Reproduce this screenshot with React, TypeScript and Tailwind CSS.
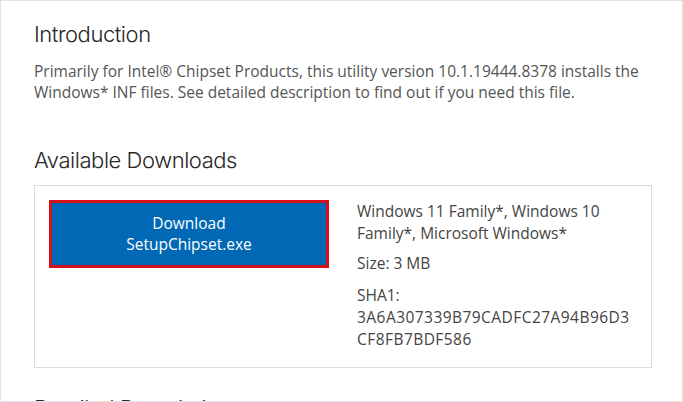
import React from 'react';

const heading = "text-[22px] font-light leading-[28px] text-[#262626] font-['Inter','Lato',sans-serif] tracking-[-0.45px]";

export default function App() {
  return (
    <div className="w-[683px] h-[402px] overflow-hidden bg-white border border-[#e2e2e2] pl-[33px] pt-[19px] font-['Open_Sans','Noto_Sans',sans-serif]">
      <h2 className={heading}>Introduction</h2>
      <p className="mt-[13px] w-[630px] text-[15.5px] leading-[21px] text-[#555]">
        Primarily for Intel® Chipset Products, this utility version 10.1.19444.8378 installs the Windows* INF files. See detailed description to find out if you need this file.
      </p>

      <h2 className={`${heading} mt-[43px]`}>Available Downloads</h2>
      <div className="mt-[11px] flex w-[618px] h-[183px] border border-[#dcdcdc] pl-[14px] pt-[14px]">
        <button className="w-[280px] h-[68px] shrink-0 border-[3px] border-[#d4101a] bg-[#0068b5] text-white text-[15.5px] leading-[21px]">
          Download
          <br />
          SetupChipset.exe
        </button>
        <div className="ml-[28px] text-[15.5px] leading-[22px] text-[#444]">
          <p>
            Windows 11 Family*, Windows 10
            <br />
            Family*, Microsoft Windows*
          </p>
          <p className="mt-[8px]">Size: 3 MB</p>
          <p className="mt-[10px]">
            SHA1:
            <br />
            <span className="tracking-[0.45px]">3A6A307339B79CADFC27A94B96D3</span>
            <br />
            <span className="tracking-[0.45px]">CF8FB7BDF586</span>
          </p>
        </div>
      </div>

      <h2 className={`${heading} mt-[26px]`}>Detailed Description</h2>
    </div>
  );
}
